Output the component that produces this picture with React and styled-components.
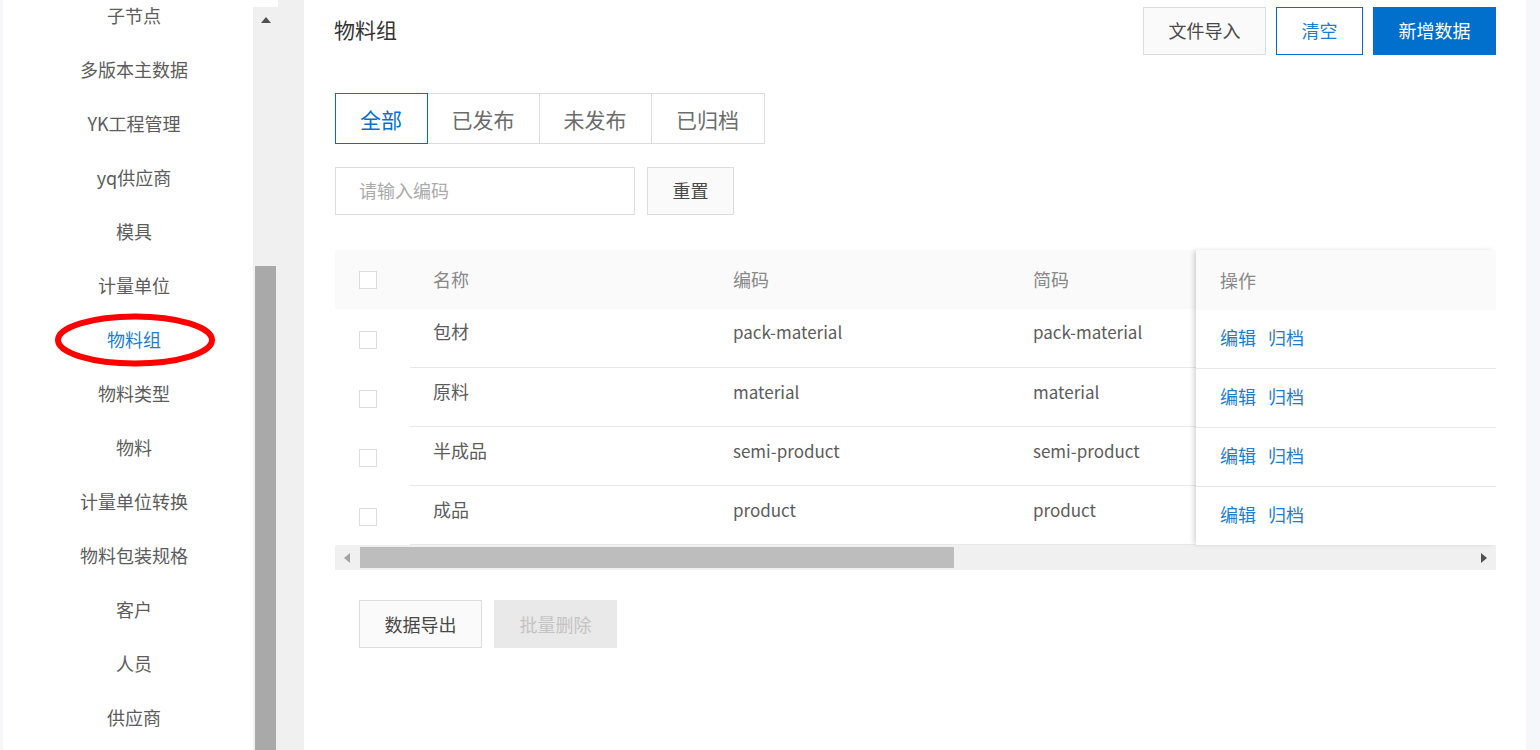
import React from "react";
import styled, { createGlobalStyle } from "styled-components";

const GlobalStyle = createGlobalStyle`
  html, body {
    margin: 0;
    padding: 0;
    height: 750px;
    overflow: hidden;
    font-family: "Noto Sans CJK SC", "Noto Sans", sans-serif;
  }
  * {
    box-sizing: border-box;
  }
`;

const Page = styled.div`
  display: flex;
  width: 1540px;
  height: 750px;
  padding-left: 3px;
  background: #f5f7fa;
  overflow: hidden;
`;

const Sidebar = styled.aside`
  display: flex;
  flex: none;
  width: 275px;
  height: 750px;
  background: #fff;
`;

const MenuList = styled.ul`
  flex: none;
  width: 250px;
  height: 750px;
  margin: 0;
  padding: 0 0 0 12px;
  list-style: none;
  overflow: hidden;
`;

const MenuItem = styled.li`
  position: relative;
  height: 54px;
  line-height: 53px;
  text-align: center;
  font-size: 18px;
  color: ${(p) => (p.$active ? "#1a7dd0" : "#5c5c5c")};
  &:first-child {
    margin-top: -11px;
  }
`;

const Circle = styled.svg`
  position: absolute;
  left: 39px;
  top: -1px;
  width: 162px;
  height: 56px;
`;

const SideScroll = styled.div`
  display: flex;
  flex-direction: column;
  flex: none;
  width: 25px;
  margin-top: 7px;
  padding: 0 2px;
  background: #f0f0f0;
`;

const ArrowUp = styled.span`
  align-self: center;
  width: 0;
  height: 0;
  margin-top: 10px;
  border-left: 5.5px solid transparent;
  border-right: 5.5px solid transparent;
  border-bottom: 6px solid #505050;
`;

const SideThumb = styled.div`
  height: 484px;
  margin-top: auto;
  background: #a9a9a9;
`;

const Gutter = styled.div`
  flex: none;
  width: 26px;
  background: #f0f0f0;
`;

const Main = styled.main`
  flex: none;
  width: 1222px;
  height: 750px;
  padding: 7px 30px 0 31px;
  background: #fff;
`;

const Header = styled.header`
  display: flex;
  align-items: center;
  justify-content: space-between;
`;

const Title = styled.h1`
  margin: 0 0 4px -1px;
  font-size: 21px;
  font-weight: 400;
  color: #333;
`;

const ButtonRow = styled.div`
  display: flex;
  gap: 10px;
`;

const Button = styled.button`
  width: ${(p) => p.$width || 123}px;
  height: 48px;
  padding: 0 0 2px;
  font-family: inherit;
  font-size: 18px;
  border: 1px solid #ddd;
  background: #fafafa;
  color: #484848;
`;

const OutlineButton = styled(Button)`
  border-color: #0170cc;
  background: #fff;
  color: #1a7dd0;
`;

const PrimaryButton = styled(Button)`
  border-color: #0170cc;
  background: #0170cc;
  color: #fff;
`;

const DisabledButton = styled(Button)`
  border-color: #e9e9e9;
  background: #e9e9e9;
  color: #c4c4c4;
`;

const FooterButton = styled(Button)`
  padding-bottom: 0;
`;

const FooterDisabledButton = styled(DisabledButton)`
  padding-bottom: 0;
`;

const Tabs = styled.div`
  display: flex;
  margin-top: 38px;
`;

const Tab = styled.div`
  width: ${(p) => p.$width}px;
  height: 51px;
  margin-left: -1px;
  padding-right: 1px;
  line-height: 51px;
  text-align: center;
  font-size: 21px;
  border: 1px solid ${(p) => (p.$active ? "#0170cc" : "#ddd")};
  color: ${(p) => (p.$active ? "#0170cc" : "#6c6c6c")};
  position: ${(p) => (p.$active ? "relative" : "static")};
  &:first-child {
    margin-left: 0;
  }
`;

const SearchRow = styled.div`
  display: flex;
  gap: 12px;
  margin-top: 23px;
`;

const SearchInput = styled.input`
  width: 300px;
  height: 48px;
  padding: 0 23px 2px;
  font-family: inherit;
  font-size: 18px;
  border: 1px solid #ddd;
  outline: none;
  &::placeholder {
    color: #aaa;
    opacity: 1;
  }
`;

const TableWrap = styled.div`
  position: relative;
  margin-top: 35px;
`;

const HeadRow = styled.div`
  display: grid;
  grid-template-columns: 98px 300px 300px 1fr;
  height: 59px;
  line-height: 59px;
  font-size: 18px;
  background: #fafafa;
  color: #888;
`;

const BodyRow = styled.div`
  display: grid;
  grid-template-columns: 75px 23px 300px 300px 1fr;
  align-items: start;
  height: 59px;
  font-size: 17px;
  line-height: ${(p) => (p.$first ? 45 : 47)}px;
  color: #5c5c5c;
  &:not(:last-child) {
    box-shadow: inset 0 -1px 0 #e8e8e8;
  }
`;

const CheckCell = styled.div`
  height: 60px;
  padding: 22px 0 0 24px;
  border-bottom: 1px solid ${(p) => (p.$last ? "transparent" : "#e8e8e8")};
  background: #fff;
`;

const HeadCheckCell = styled.div`
  display: flex;
  align-items: center;
  padding-left: 24px;
`;

const Checkbox = styled.span`
  display: block;
  width: 18px;
  height: 18px;
  border: 1px solid #ddd;
  background: #fff;
`;

const NameCell = styled.div`
  grid-column: 3;
  font-size: 18px;
`;

const FixedColumn = styled.div`
  position: absolute;
  top: 0;
  right: 0;
  width: 300px;
  height: 295px;
  background: #fff;
  box-shadow: -3px 0 5px -1px rgba(0, 0, 0, 0.18);
`;

const FixedHead = styled.div`
  height: 60px;
  padding-left: 24px;
  line-height: 60px;
  font-size: 18px;
  background: #fafafa;
  color: #888;
`;

const FixedRow = styled.div`
  display: flex;
  gap: 12px;
  height: 59px;
  padding-left: 24px;
  line-height: 54px;
  font-size: 18px;
  border-bottom: 1px solid #e8e8e8;
  &:last-child {
    border-bottom: 0;
  }
`;

const ActionLink = styled.a`
  color: #1a7dd0;
`;

const HScroll = styled.div`
  display: flex;
  align-items: center;
  position: relative;
  height: 25px;
  background: #f0f0f0;
`;

const ArrowLeft = styled.span`
  flex: none;
  width: 0;
  height: 0;
  margin: 0 10px 0 9px;
  border-top: 5.5px solid transparent;
  border-bottom: 5.5px solid transparent;
  border-right: 6px solid #a3a3a3;
`;

const HThumb = styled.div`
  flex: none;
  width: 594px;
  height: 21px;
  background: #bdbdbd;
`;

const ArrowRight = styled.span`
  flex: none;
  width: 0;
  height: 0;
  margin: 0 9px 0 auto;
  border-top: 5.5px solid transparent;
  border-bottom: 5.5px solid transparent;
  border-left: 6px solid #505050;
`;

const Footer = styled.div`
  display: flex;
  gap: 12px;
  margin-top: 30px;
  padding-left: 24px;
`;

const menu = [
  "子节点",
  "多版本主数据",
  "YK工程管理",
  "yq供应商",
  "模具",
  "计量单位",
  "物料组",
  "物料类型",
  "物料",
  "计量单位转换",
  "物料包装规格",
  "客户",
  "人员",
  "供应商",
];

const tabs = [
  { label: "全部", width: 93, active: true },
  { label: "已发布", width: 113 },
  { label: "未发布", width: 113 },
  { label: "已归档", width: 114 },
];

const rows = [
  { name: "包材", code: "pack-material" },
  { name: "原料", code: "material" },
  { name: "半成品", code: "semi-product" },
  { name: "成品", code: "product" },
];

export default function App() {
  return (
    <Page>
      <GlobalStyle />
      <Sidebar>
        <MenuList>
          {menu.map((item) => (
            <MenuItem key={item} $active={item === "物料组"}>
              {item}
              {item === "物料组" && (
                <Circle viewBox="0 0 162 56">
                  <ellipse cx="81" cy="28" rx="77" ry="23.5" fill="none" stroke="#f00" strokeWidth="6" />
                </Circle>
              )}
            </MenuItem>
          ))}
        </MenuList>
        <SideScroll>
          <ArrowUp />
          <SideThumb />
        </SideScroll>
      </Sidebar>
      <Gutter />
      <Main>
        <Header>
          <Title>物料组</Title>
          <ButtonRow>
            <Button>文件导入</Button>
            <OutlineButton $width={87}>清空</OutlineButton>
            <PrimaryButton>新增数据</PrimaryButton>
          </ButtonRow>
        </Header>
        <Tabs>
          {tabs.map((tab) => (
            <Tab key={tab.label} $width={tab.width} $active={tab.active}>
              {tab.label}
            </Tab>
          ))}
        </Tabs>
        <SearchRow>
          <SearchInput placeholder="请输入编码" />
          <Button $width={87}>重置</Button>
        </SearchRow>
        <TableWrap>
          <HeadRow>
            <HeadCheckCell>
              <Checkbox />
            </HeadCheckCell>
            <div>名称</div>
            <div>编码</div>
            <div>简码</div>
          </HeadRow>
          {rows.map((row, i) => (
            <BodyRow key={row.code} $first={i === 0}>
              <CheckCell $last={i === rows.length - 1}>
                <Checkbox />
              </CheckCell>
              <NameCell>{row.name}</NameCell>
              <div>{row.code}</div>
              <div>{row.code}</div>
            </BodyRow>
          ))}
          <HScroll>
            <ArrowLeft />
            <HThumb />
            <ArrowRight />
          </HScroll>
          <FixedColumn>
            <FixedHead>操作</FixedHead>
            {rows.map((row) => (
              <FixedRow key={row.code}>
                <ActionLink>编辑</ActionLink>
                <ActionLink>归档</ActionLink>
              </FixedRow>
            ))}
          </FixedColumn>
        </TableWrap>
        <Footer>
          <FooterButton>数据导出</FooterButton>
          <FooterDisabledButton>批量删除</FooterDisabledButton>
        </Footer>
      </Main>
    </Page>
  );
}
